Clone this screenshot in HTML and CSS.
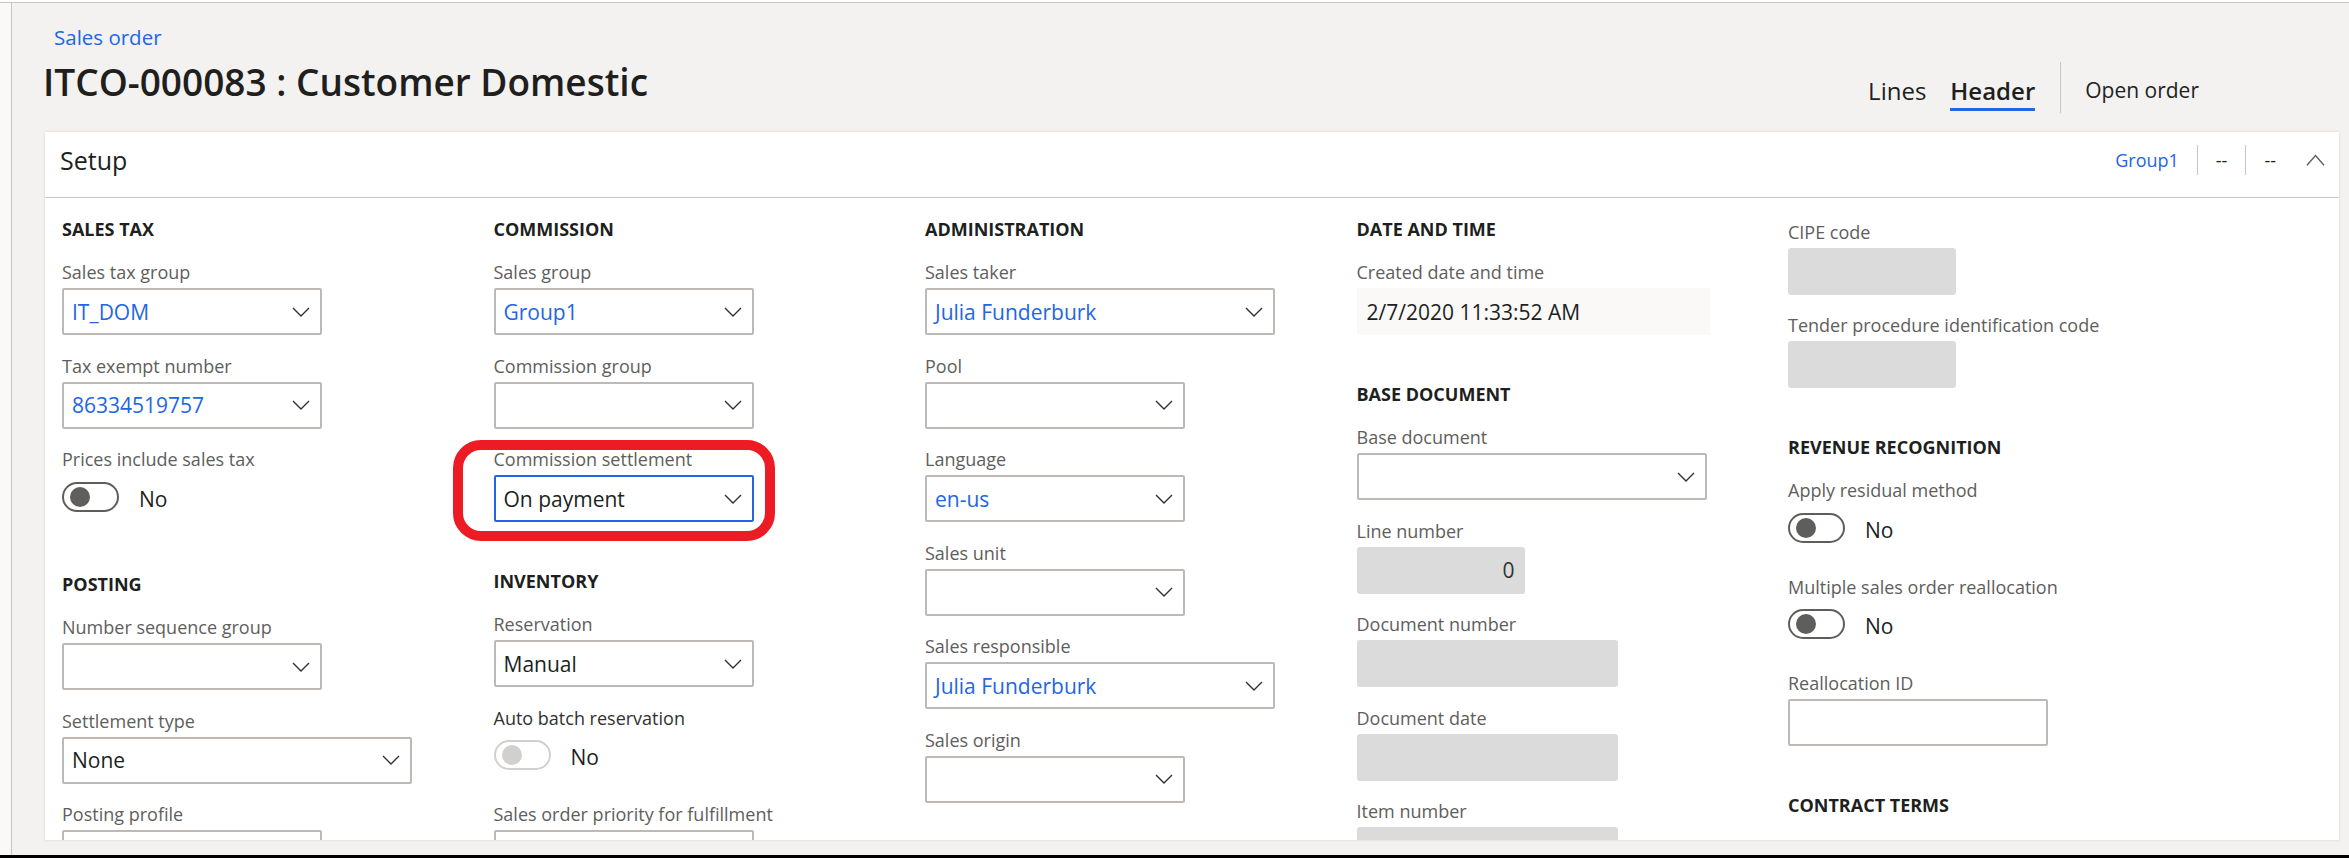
FILE: index.html
```html
<!DOCTYPE html>
<html lang="en">
<head>
<meta charset="utf-8">
<title>Sales order</title>
<link rel="stylesheet" href="styles.css">
</head>
<body>
<div class="screen">
  <aside class="rail"></aside>
  <main class="main">
    <header class="page-head">
      <div class="titles">
        <a class="crumb">Sales order</a>
        <h1 class="title">ITCO-000083 : Customer Domestic</h1>
      </div>
      <nav class="tabs">
        <span class="tab"><span class="tab-text">Lines</span></span>
        <span class="tab active"><span class="tab-text">Header</span></span>
        <span class="tab-sep"></span>
        <span class="tab action"><span class="tab-text">Open order</span></span>
      </nav>
    </header>

    <section class="card">
      <div class="card-head">
        <h2 class="card-title">Setup</h2>
        <div class="summary">
          <span class="sum-item link">Group1</span>
          <span class="sum-sep"></span>
          <span class="sum-item">--</span>
          <span class="sum-sep"></span>
          <span class="sum-item">--</span>
          <svg class="chev-up" viewBox="0 0 19 12" width="19" height="12"><path d="M1 11.2 9.5 1.5 18 11.2"/></svg>
        </div>
      </div>

      <div class="card-body">
        <!-- Column 1 -->
        <div class="col">
          <div class="section">
            <h3 class="heading">SALES TAX</h3>
            <div class="field">
              <label class="label">Sales tax group</label>
              <div class="input w260 link"><span class="val">IT_DOM</span><svg class="chev" viewBox="0 0 18 10" width="18" height="10"><path d="M1 1l8 8 8-8"/></svg></div>
            </div>
            <div class="field">
              <label class="label">Tax exempt number</label>
              <div class="input w260 link"><span class="val">86334519757</span><svg class="chev" viewBox="0 0 18 10" width="18" height="10"><path d="M1 1l8 8 8-8"/></svg></div>
            </div>
            <div class="field">
              <label class="label">Prices include sales tax</label>
              <div class="toggle-row"><span class="toggle"><span class="knob"></span></span><span class="toggle-text">No</span></div>
            </div>
          </div>
          <div class="section">
            <h3 class="heading">POSTING</h3>
            <div class="field">
              <label class="label">Number sequence group</label>
              <div class="input w260"><span class="val"></span><svg class="chev" viewBox="0 0 18 10" width="18" height="10"><path d="M1 1l8 8 8-8"/></svg></div>
            </div>
            <div class="field">
              <label class="label">Settlement type</label>
              <div class="input w350"><span class="val">None</span><svg class="chev" viewBox="0 0 18 10" width="18" height="10"><path d="M1 1l8 8 8-8"/></svg></div>
            </div>
            <div class="field">
              <label class="label">Posting profile</label>
              <div class="input w260"><span class="val"></span><svg class="chev" viewBox="0 0 18 10" width="18" height="10"><path d="M1 1l8 8 8-8"/></svg></div>
            </div>
          </div>
        </div>

        <!-- Column 2 -->
        <div class="col">
          <div class="section">
            <h3 class="heading">COMMISSION</h3>
            <div class="field">
              <label class="label">Sales group</label>
              <div class="input w260 link"><span class="val">Group1</span><svg class="chev" viewBox="0 0 18 10" width="18" height="10"><path d="M1 1l8 8 8-8"/></svg></div>
            </div>
            <div class="field">
              <label class="label">Commission group</label>
              <div class="input w260"><span class="val"></span><svg class="chev" viewBox="0 0 18 10" width="18" height="10"><path d="M1 1l8 8 8-8"/></svg></div>
            </div>
            <div class="field marked">
              <label class="label">Commission settlement</label>
              <div class="input w260 focused"><span class="val">On payment</span><svg class="chev" viewBox="0 0 18 10" width="18" height="10"><path d="M1 1l8 8 8-8"/></svg></div>
              <span class="annotation"></span>
            </div>
          </div>
          <div class="section">
            <h3 class="heading">INVENTORY</h3>
            <div class="field">
              <label class="label">Reservation</label>
              <div class="input w260"><span class="val">Manual</span><svg class="chev" viewBox="0 0 18 10" width="18" height="10"><path d="M1 1l8 8 8-8"/></svg></div>
            </div>
            <div class="field">
              <label class="label dark">Auto batch reservation</label>
              <div class="toggle-row"><span class="toggle disabled"><span class="knob"></span></span><span class="toggle-text">No</span></div>
            </div>
            <div class="field">
              <label class="label">Sales order priority for fulfillment</label>
              <div class="input w260"><span class="val"></span></div>
            </div>
          </div>
        </div>

        <!-- Column 3 -->
        <div class="col">
          <div class="section">
            <h3 class="heading">ADMINISTRATION</h3>
            <div class="field">
              <label class="label">Sales taker</label>
              <div class="input w350 link"><span class="val">Julia Funderburk</span><svg class="chev" viewBox="0 0 18 10" width="18" height="10"><path d="M1 1l8 8 8-8"/></svg></div>
            </div>
            <div class="field">
              <label class="label">Pool</label>
              <div class="input w260"><span class="val"></span><svg class="chev" viewBox="0 0 18 10" width="18" height="10"><path d="M1 1l8 8 8-8"/></svg></div>
            </div>
            <div class="field">
              <label class="label">Language</label>
              <div class="input w260 link"><span class="val">en-us</span><svg class="chev" viewBox="0 0 18 10" width="18" height="10"><path d="M1 1l8 8 8-8"/></svg></div>
            </div>
            <div class="field">
              <label class="label">Sales unit</label>
              <div class="input w260"><span class="val"></span><svg class="chev" viewBox="0 0 18 10" width="18" height="10"><path d="M1 1l8 8 8-8"/></svg></div>
            </div>
            <div class="field">
              <label class="label">Sales responsible</label>
              <div class="input w350 link"><span class="val">Julia Funderburk</span><svg class="chev" viewBox="0 0 18 10" width="18" height="10"><path d="M1 1l8 8 8-8"/></svg></div>
            </div>
            <div class="field">
              <label class="label">Sales origin</label>
              <div class="input w260"><span class="val"></span><svg class="chev" viewBox="0 0 18 10" width="18" height="10"><path d="M1 1l8 8 8-8"/></svg></div>
            </div>
          </div>
        </div>

        <!-- Column 4 -->
        <div class="col">
          <div class="section">
            <h3 class="heading">DATE AND TIME</h3>
            <div class="field">
              <label class="label">Created date and time</label>
              <div class="display w353"><span class="val">2/7/2020 11:33:52 AM</span></div>
            </div>
          </div>
          <div class="section">
            <h3 class="heading">BASE DOCUMENT</h3>
            <div class="field">
              <label class="label">Base document</label>
              <div class="input w350"><span class="val"></span><svg class="chev" viewBox="0 0 18 10" width="18" height="10"><path d="M1 1l8 8 8-8"/></svg></div>
            </div>
            <div class="field">
              <label class="label">Line number</label>
              <div class="readonly w168 num"><span class="val">0</span></div>
            </div>
            <div class="field">
              <label class="label">Document number</label>
              <div class="readonly w261"></div>
            </div>
            <div class="field">
              <label class="label">Document date</label>
              <div class="readonly w261"></div>
            </div>
            <div class="field">
              <label class="label">Item number</label>
              <div class="readonly w261"></div>
            </div>
          </div>
        </div>

        <!-- Column 5 -->
        <div class="col col-last">
          <div class="section">
            <div class="field">
              <label class="label">CIPE code</label>
              <div class="readonly w168"></div>
            </div>
            <div class="field">
              <label class="label">Tender procedure identification code</label>
              <div class="readonly w168"></div>
            </div>
          </div>
          <div class="section">
            <h3 class="heading">REVENUE RECOGNITION</h3>
            <div class="field">
              <label class="label">Apply residual method</label>
              <div class="toggle-row"><span class="toggle"><span class="knob"></span></span><span class="toggle-text">No</span></div>
            </div>
            <div class="field">
              <label class="label">Multiple sales order reallocation</label>
              <div class="toggle-row"><span class="toggle"><span class="knob"></span></span><span class="toggle-text">No</span></div>
            </div>
            <div class="field">
              <label class="label">Reallocation ID</label>
              <div class="input w260"><span class="val"></span></div>
            </div>
          </div>
          <div class="section">
            <h3 class="heading">CONTRACT TERMS</h3>
          </div>
        </div>
      </div>
    </section>
  </main>
</div>
<div class="bottom-bar"></div>
</body>
</html>
```

FILE: styles.css
```css
* { box-sizing: border-box; }

html, body {
  margin: 0;
  padding: 0;
}

body {
  width: 2349px;
  height: 858px;
  overflow: hidden;
  background: #ffffff;
  font-family: "Open Sans", "Noto Sans", sans-serif;
  color: #201f1e;
}

.screen {
  display: flex;
  margin-top: 2px;
  border-top: 1px solid #c8c6c4;
  height: 853px;
}

.rail {
  width: 12px;
  flex: none;
  background: #faf9f8;
  border-right: 1px solid #c8c6c4;
}

.main {
  flex: 1;
  display: flex;
  flex-direction: column;
  background: #f3f2f1;
  padding-left: 33px;
  overflow: hidden;
}

/* ---------- page header ---------- */
.page-head {
  height: 129px;
  flex: none;
  display: flex;
  justify-content: space-between;
  align-items: flex-start;
  padding-top: 20px;
  padding-right: 150px;
}

.crumb {
  display: block;
  margin-left: 9px;
  font-size: 20.5px;
  line-height: 28px;
  color: #2266e3;
  text-decoration: none;
}

.title {
  margin: 7px 0 0 -2px;
  font-size: 37px;
  line-height: 48px;
  font-weight: 600;
  color: #201f1e;
  letter-spacing: 0;
}

.tabs {
  display: flex;
  align-items: flex-start;
  margin-top: 39px;
}

.tab {
  height: 51px;
  padding-top: 13px;
  font-size: 24px;
  line-height: 31px;
  color: #201f1e;
}

.tab + .tab { margin-left: 24px; }

.tab.action {
  padding-top: 13px;
  font-size: 21px;
  line-height: 30px;
}

.tab-text {
  display: block;
  padding-bottom: 2px;
  border-bottom: 3px solid transparent;
}

.tab.active .tab-text {
  font-weight: 600;
  border-bottom-color: #2266e3;
}

.tab-sep {
  width: 1px;
  height: 51px;
  background: #c8c6c4;
  margin: 0 24px 0 25px;
}

/* ---------- card ---------- */
.card {
  flex: 1;
  margin-right: 10px;
  margin-bottom: 15px;
  background: #ffffff;
  box-shadow: 0 0 3px rgba(0, 0, 0, 0.12);
  overflow: hidden;
}

.card-head {
  height: 66px;
  padding: 0 14px 10px 15px;
  border-bottom: 1px solid #c8c6c4;
  display: flex;
  align-items: center;
  justify-content: space-between;
}

.card-title {
  margin: 0;
  font-size: 25px;
  line-height: 32px;
  font-weight: 400;
  color: #201f1e;
}

.summary {
  display: flex;
  align-items: center;
}

.sum-item {
  padding: 0 18px;
  font-size: 18px;
  line-height: 24px;
  color: #201f1e;
}

.sum-item.link { color: #2266e3; }

.sum-sep {
  width: 1px;
  height: 30px;
  background: #c8c6c4;
}

.chev-up {
  margin-left: 12px;
  fill: none;
  stroke: #605e5c;
  stroke-width: 1.4;
}

.card-body {
  display: grid;
  grid-template-columns: repeat(5, 431.5px);
  padding: 18.5px 0 0 17px;
}

.col-last { padding-top: 3px; }

.section + .section { margin-top: 46.5px; }

.heading {
  margin: 0 0 19.5px;
  font-size: 18px;
  line-height: 24px;
  font-weight: 700;
  color: #201f1e;
  white-space: nowrap;
}

.field {
  position: relative;
  margin-bottom: 18.5px;
}

.label {
  display: block;
  margin-bottom: 4px;
  font-size: 18px;
  line-height: 24px;
  color: #605e5c;
  white-space: nowrap;
}

.label.dark { color: #323130; }

.input,
.readonly,
.display {
  height: 47px;
  display: flex;
  align-items: center;
  font-size: 21px;
  line-height: 28px;
  color: #201f1e;
}

.input {
  justify-content: space-between;
  padding: 0 10px 0 8px;
  border: 2px solid #bcb9b6;
  border-radius: 2px;
  background: #ffffff;
}

.input.focused { border-color: #2266e3; }

.input.link { color: #2266e3; }

.chev {
  flex: none;
  fill: none;
  stroke: #323130;
  stroke-width: 1.4;
}

.readonly {
  background: #dbdbdb;
  border-radius: 3px;
  padding: 0 10px;
}

.readonly.num { justify-content: flex-end; color: #323130; }

.display {
  background: #faf9f8;
  padding: 0 10px;
}

.w168 { width: 168px; }
.w260 { width: 260px; }
.w261 { width: 261px; }
.w350 { width: 350px; }
.w353 { width: 353px; }

.toggle-row {
  height: 50px;
  display: flex;
  align-items: flex-start;
  padding-top: 6.5px;
}

.toggle {
  width: 57px;
  height: 30px;
  flex: none;
  border: 2px solid #605e5c;
  border-radius: 15px;
  display: flex;
  align-items: center;
  padding-left: 6px;
}

.knob {
  width: 20px;
  height: 20px;
  border-radius: 50%;
  background: #605e5c;
}

.toggle.disabled { border-color: #d2d0ce; }
.toggle.disabled .knob { background: #d2d0ce; }

.toggle-text {
  margin-left: 20px;
  padding-top: 2px;
  font-size: 21px;
  line-height: 30px;
  color: #201f1e;
}

.annotation {
  position: absolute;
  top: -7px;
  left: -41px;
  right: 150px;
  bottom: -19px;
  border: 10px solid #ed1c24;
  border-radius: 28px;
  pointer-events: none;
}

.bottom-bar {
  height: 3px;
  background: #000000;
}
```
